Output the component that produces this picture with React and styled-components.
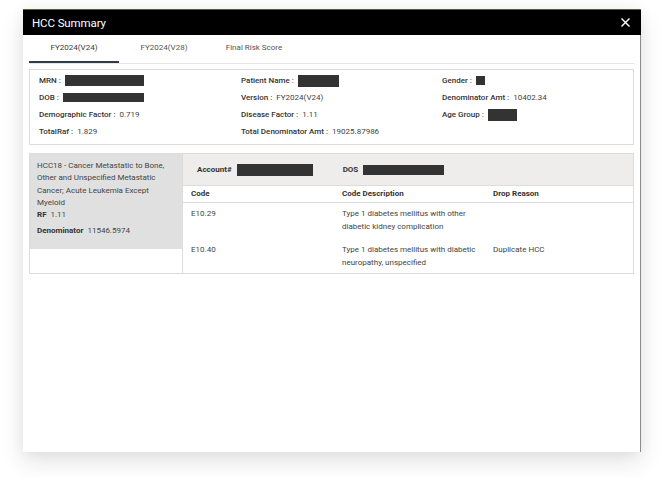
import React from "react";
import styled, { createGlobalStyle } from "styled-components";

const Global = createGlobalStyle`
  html, body { margin: 0; padding: 0; background: #ffffff; }
  body { font-family: Roboto, "Liberation Sans", Arial, sans-serif; }
  * { box-sizing: border-box; }
`;

const Page = styled.div`
  width: 664px;
  height: 478px;
  padding: 9px 0 0 23px;
  overflow: hidden;
`;

const Modal = styled.div`
  width: 618px;
  height: 443px;
  background: #fff;
  border-top: 1px solid #5e5b34;
  border-right: 1px solid #8c8c8c;
  box-shadow: 0 10px 22px rgba(0, 0, 0, 0.11), 0 0 14px rgba(0, 0, 0, 0.05);
  display: flex;
  flex-direction: column;
`;

const Header = styled.div`
  height: 25px;
  background: #000;
  display: flex;
  align-items: center;
  justify-content: space-between;
  padding: 0 11px 0 9px;
  margin-right: -1px;
`;

const Title = styled.div`
  color: #fff;
  font-size: 11.5px;
  letter-spacing: -0.1px;
`;

const CloseBtn = styled.button`
  background: none;
  border: 0;
  padding: 0;
  width: 10px;
  height: 10px;
  display: flex;
  align-items: center;
  justify-content: center;
  cursor: pointer;
`;

const Body = styled.div`
  padding: 0 6px 0 6px;
  display: flex;
  flex-direction: column;
`;

const TabBar = styled.div`
  display: flex;
  border-bottom: 1px solid #e6e6e6;
`;

const Tab = styled.div`
  width: 90px;
  height: 28px;
  padding-bottom: 1px;
  display: flex;
  align-items: center;
  justify-content: center;
  font-size: 8px;
  color: ${(p) => (p.$active ? "#3a3a3a" : "#555")};
  border-bottom: 2px solid ${(p) => (p.$active ? "#2e3c4a" : "transparent")};
`;

const InfoBox = styled.div`
  margin-top: 5px;
  border: 1px solid #dcdcdc;
  padding: 2px 9px 4px;
  display: grid;
  grid-template-columns: 202px 201px 1fr;
  grid-auto-rows: 17px;
`;

const Field = styled.div`
  display: flex;
  align-items: center;
  font-size: 8px;
  color: #444;
  white-space: nowrap;
`;

const Label = styled.span`
  font-weight: 500;
  color: #333;
  margin-right: 4px;
`;

const Redact = styled.span`
  display: inline-block;
  width: ${(p) => p.$w}px;
  height: ${(p) => p.$h || 11}px;
  background: #333;
`;

const Lower = styled.div`
  margin-top: 8px;
  display: flex;
  height: 121px;
`;

const LeftPanel = styled.div`
  width: 153px;
  border: 1px solid #dcdcdc;
  border-right: 0;
  background: #fff;
`;

const HccCard = styled.div`
  background: #e0e0e0;
  height: 95px;
  padding: 6px 7px;
  font-size: 8px;
  color: #444;
  line-height: 12.3px;
`;

const HccLine = styled.div`
  margin-top: ${(p) => p.$mt || 0}px;
  b { font-weight: 700; color: #333; margin-right: 4px; }
`;

const RightPanel = styled.div`
  flex: 1;
  border: 1px solid #dcdcdc;
  display: flex;
  flex-direction: column;
`;

const AccountBar = styled.div`
  height: 32px;
  background: #eeedeb;
  border-bottom: 1px solid #dcdcdc;
  display: flex;
  align-items: center;
  padding: 0 14px;
  font-size: 8px;
`;

const AccItem = styled.div`
  display: flex;
  align-items: center;
  margin-right: ${(p) => p.$mr || 0}px;
  b { font-weight: 700; color: #333; margin-right: 5px; }
`;

const Row = styled.div`
  display: grid;
  grid-template-columns: 151px 151px 1fr;
  font-size: 8px;
  color: ${(p) => (p.$head ? "#333" : "#444")};
  font-weight: ${(p) => (p.$head ? 700 : 400)};
  height: ${(p) => p.$h}px;
  border-bottom: ${(p) => (p.$head ? "1px solid #dcdcdc" : "0")};
  align-items: ${(p) => (p.$head ? "center" : "start")};
  padding-top: ${(p) => (p.$head ? 0 : 5)}px;
  line-height: 12.5px;
`;

const Cell = styled.div`
  padding: 0 8px;
`;

const CloseIcon = () => (
  <svg width="9" height="9" viewBox="0 0 9 9">
    <path d="M1 1 L8 8 M8 1 L1 8" stroke="#fff" strokeWidth="1.4" strokeLinecap="square" />
  </svg>
);

export default function App() {
  return (
    <>
      <Global />
      <Page>
        <Modal>
          <Header>
            <Title>HCC Summary</Title>
            <CloseBtn aria-label="Close"><CloseIcon /></CloseBtn>
          </Header>
          <Body>
            <TabBar>
              <Tab $active>FY2024(V24)</Tab>
              <Tab>FY2024(V28)</Tab>
              <Tab>Final Risk Score</Tab>
            </TabBar>
            <InfoBox>
              <Field><Label>MRN :</Label><Redact $w={79} /></Field>
              <Field><Label>Patient Name :</Label><Redact $w={41} $h={12} /></Field>
              <Field><Label>Gender :</Label><Redact $w={9} $h={9} /></Field>
              <Field><Label>DOB :</Label><Redact $w={81} $h={9} /></Field>
              <Field><Label>Version :</Label>FY2024(V24)</Field>
              <Field><Label>Denominator Amt :</Label>10402.34</Field>
              <Field><Label>Demographic Factor :</Label>0.719</Field>
              <Field><Label>Disease Factor :</Label>1.11</Field>
              <Field><Label>Age Group :</Label><Redact $w={29} $h={12} /></Field>
              <Field><Label>TotalRaf :</Label>1.829</Field>
              <Field><Label>Total Denominator Amt :</Label>19025.87986</Field>
              <Field />
            </InfoBox>
            <Lower>
              <LeftPanel>
                <HccCard>
                  <HccLine>HCC18 - Cancer Metastatic to Bone, Other and Unspecified Metastatic Cancer; Acute Leukemia Except Myeloid</HccLine>
                  <HccLine><b>RF</b>1.11</HccLine>
                  <HccLine $mt={4}><b>Denominator</b>11546.5974</HccLine>
                </HccCard>
              </LeftPanel>
              <RightPanel>
                <AccountBar>
                  <AccItem $mr={30}><b>Account#</b><Redact $w={76} $h={12} /></AccItem>
                  <AccItem><b>DOS</b><Redact $w={81} $h={10} /></AccItem>
                </AccountBar>
                <Row $head $h={17}>
                  <Cell>Code</Cell>
                  <Cell>Code Description</Cell>
                  <Cell>Drop Reason</Cell>
                </Row>
                <Row $h={36}>
                  <Cell>E10.29</Cell>
                  <Cell>Type 1 diabetes mellitus with other diabetic kidney complication</Cell>
                  <Cell></Cell>
                </Row>
                <Row $h={34}>
                  <Cell>E10.40</Cell>
                  <Cell>Type 1 diabetes mellitus with diabetic neuropathy, unspecified</Cell>
                  <Cell>Duplicate HCC</Cell>
                </Row>
              </RightPanel>
            </Lower>
          </Body>
        </Modal>
      </Page>
    </>
  );
}
